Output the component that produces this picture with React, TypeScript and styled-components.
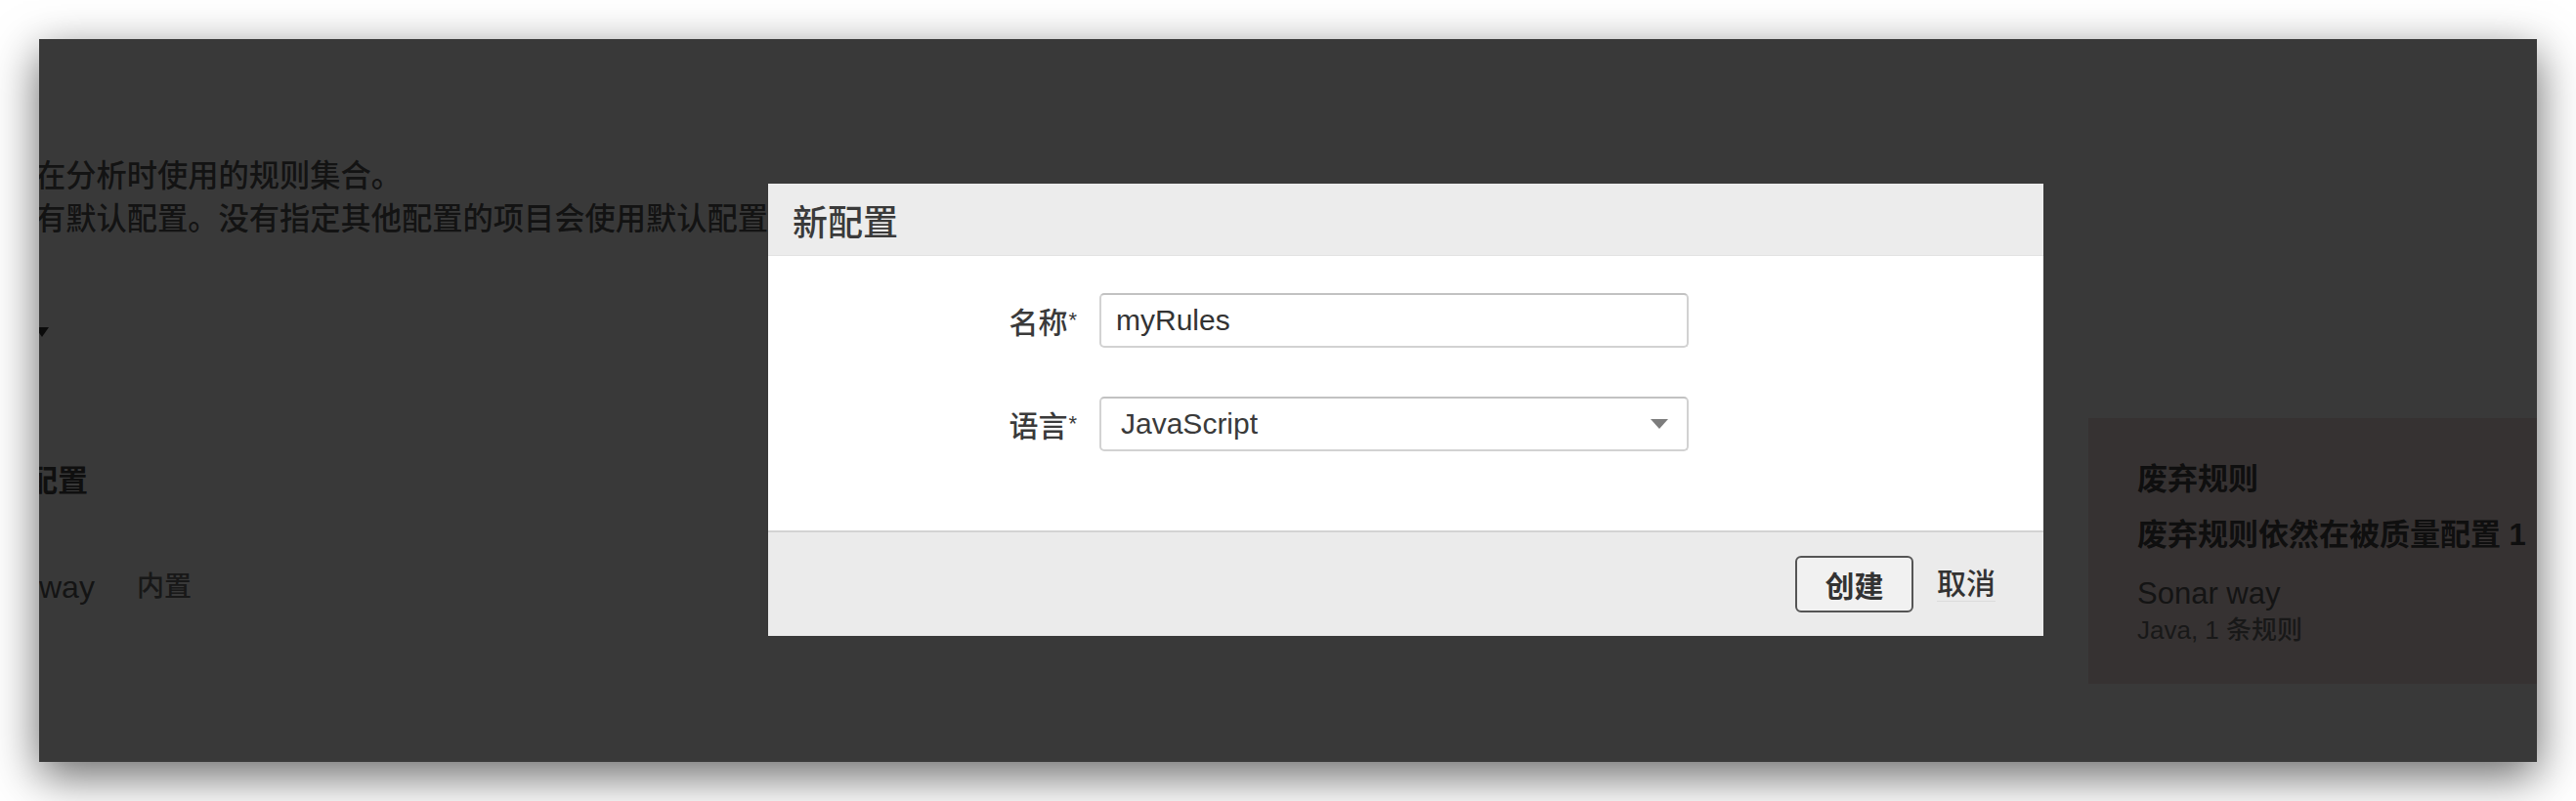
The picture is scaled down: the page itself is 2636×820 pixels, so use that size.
import React from 'react';
import styled, { createGlobalStyle } from 'styled-components';

const GlobalStyle = createGlobalStyle`
  html, body {
    margin: 0;
    padding: 0;
    background: #fff;
    overflow: hidden;
  }
  body {
    font-family: "Liberation Sans", "Noto Sans CJK SC", sans-serif;
  }
`;

const Stage = styled.div`
  width: 2636px;
  height: 820px;
  padding: 40px;
  box-sizing: border-box;
`;

const Window = styled.div`
  position: relative;
  width: 2556px;
  height: 740px;
  overflow: hidden;
  background: #fff;
  box-shadow: 0 14px 44px rgba(0, 0, 0, 0.6);
`;

/* page behind the modal */

const PageLayer = styled.div`
  display: grid;
  grid-template-columns: 2097px 560px;
  color: #555;
  font-size: 31px;
  font-weight: 500;
`;

const MainColumn = styled.div`
  display: flex;
  flex-direction: column;
  padding-top: 119px;
`;

const Intro = styled.p`
  margin: 0 0 0 -4px;
  font-size: 31.25px;
  line-height: 44px;
  white-space: nowrap;
`;

const FilterToggle = styled.div`
  display: flex;
  align-items: center;
  height: 44px;
  margin: 71px 0 0 -4px;
`;

const Caret = styled.span`
  width: 0;
  height: 0;
  border-left: 7px solid transparent;
  border-right: 7px solid transparent;
  border-top: 10px solid #333;
`;

const SectionTitle = styled.h2`
  margin: 109px 0 0 -12px;
  font-size: 31px;
  line-height: 44px;
  font-weight: 700;
  color: #444;
`;

const ProfileRow = styled.div`
  display: flex;
  align-items: center;
  gap: 43px;
  margin-top: 64px;
  line-height: 44px;
`;

const ProfileName = styled.span`
  font-size: 32px;
  color: #5a5a5a;
`;

const BuiltInTag = styled.span`
  font-size: 28px;
  color: #6a6a6a;
`;

const Sidebar = styled.aside`
  padding-top: 388px;
`;

const DeprecatedBox = styled.div`
  height: 272px;
  box-sizing: border-box;
  padding: 41px 0 0 50px;
  background: #f2dede;
  white-space: nowrap;
`;

const BoxTitle = styled.h3`
  margin: 0;
  font-size: 31px;
  line-height: 44px;
  font-weight: 700;
  color: #444;
`;

const BoxText = styled.p`
  margin: 13px 0 0;
  font-size: 31px;
  line-height: 44px;
  font-weight: 700;
  color: #444;
`;

const BoxProfile = styled.div`
  margin-top: 18px;
  font-size: 31px;
  line-height: 40px;
  color: #5a5a5a;
`;

const BoxMeta = styled.div`
  font-size: 26px;
  line-height: 34px;
  color: #6e6e6e;
`;

const Overlay = styled.div`
  position: absolute;
  inset: 0;
  background: rgba(0, 0, 0, 0.776);
`;

/* modal */

const Dialog = styled.div`
  position: absolute;
  left: 746px;
  top: 148px;
  width: 1305px;
  background: #fff;
  color: #3a3a3a;
  font-size: 30px;
  font-weight: 500;
`;

const DialogHeader = styled.header`
  display: flex;
  align-items: center;
  height: 74px;
  box-sizing: border-box;
  padding: 0 25px;
  background: #ececec;
  border-bottom: 1px solid #e2e2e2;
`;

const DialogTitle = styled.h2`
  margin: 0;
  font-size: 36px;
  font-weight: 500;
  color: #3a3a3a;
`;

const DialogBody = styled.div`
  display: flex;
  flex-direction: column;
  gap: 50px;
  padding: 38px 0 81px;
`;

const FormRow = styled.div`
  display: grid;
  grid-template-columns: 316px 603px;
  column-gap: 23px;
  align-items: center;
`;

const Label = styled.label`
  text-align: right;
  font-size: 30px;
  color: #3a3a3a;
`;

const Required = styled.sup`
  font-size: 22px;
  line-height: 0;
  vertical-align: 6px;
  margin-left: 1px;
`;

const TextInput = styled.input`
  height: 56px;
  box-sizing: border-box;
  padding: 0 15px;
  border: 2px solid #d2d2d2;
  border-top-color: #c2c2c2;
  border-radius: 5px;
  font-family: inherit;
  font-size: 30px;
  font-weight: 500;
  color: #333;
  background: #fff;
  outline: none;
`;

const SelectBox = styled.div`
  display: flex;
  align-items: center;
  justify-content: space-between;
  height: 56px;
  box-sizing: border-box;
  padding: 0 19px 0 20px;
  border: 2px solid #d2d2d2;
  border-top-color: #c2c2c2;
  border-radius: 5px;
  font-size: 30px;
  color: #3a3a3a;
`;

const SelectArrow = styled.span`
  width: 0;
  height: 0;
  border-left: 9px solid transparent;
  border-right: 9px solid transparent;
  border-top: 10px solid #7d7d7d;
`;

const DialogFooter = styled.footer`
  display: flex;
  align-items: center;
  justify-content: flex-end;
  gap: 24px;
  height: 108px;
  box-sizing: border-box;
  padding-right: 49px;
  background: #ebebeb;
  border-top: 2px solid #d3d3d3;
`;

const Button = styled.button`
  width: 121px;
  height: 58px;
  box-sizing: border-box;
  border: 2px solid #555;
  border-radius: 6px;
  background: #f1f1f1;
  font-family: inherit;
  font-size: 30px;
  font-weight: 600;
  color: #333;
  padding: 0;
`;

const CancelLink = styled.a`
  font-size: 30px;
  color: #333;
  text-decoration: none;
  border-bottom: 1px solid #dcdcdc;
  line-height: 34px;
`;

const App = () => {
  return (
    <>
      <GlobalStyle />
      <Stage>
        <Window>
          <PageLayer>
            <MainColumn>
              <Intro>在分析时使用的规则集合。</Intro>
              <Intro>有默认配置。没有指定其他配置的项目会使用默认配置。</Intro>
              <FilterToggle>
                <Caret />
              </FilterToggle>
              <SectionTitle>配置</SectionTitle>
              <ProfileRow>
                <ProfileName>way</ProfileName>
                <BuiltInTag>内置</BuiltInTag>
              </ProfileRow>
            </MainColumn>
            <Sidebar>
              <DeprecatedBox>
                <BoxTitle>废弃规则</BoxTitle>
                <BoxText>废弃规则依然在被质量配置 1</BoxText>
                <BoxProfile>Sonar way</BoxProfile>
                <BoxMeta>Java, 1 条规则</BoxMeta>
              </DeprecatedBox>
            </Sidebar>
          </PageLayer>
          <Overlay />
          <Dialog>
            <DialogHeader>
              <DialogTitle>新配置</DialogTitle>
            </DialogHeader>
            <DialogBody>
              <FormRow>
                <Label htmlFor='profile-name'>
                  名称<Required>*</Required>
                </Label>
                <TextInput id='profile-name' defaultValue='myRules' />
              </FormRow>
              <FormRow>
                <Label>
                  语言<Required>*</Required>
                </Label>
                <SelectBox>
                  <span>JavaScript</span>
                  <SelectArrow />
                </SelectBox>
              </FormRow>
            </DialogBody>
            <DialogFooter>
              <Button>创建</Button>
              <CancelLink href='#'>取消</CancelLink>
            </DialogFooter>
          </Dialog>
        </Window>
      </Stage>
    </>
  );
};

export default App;
